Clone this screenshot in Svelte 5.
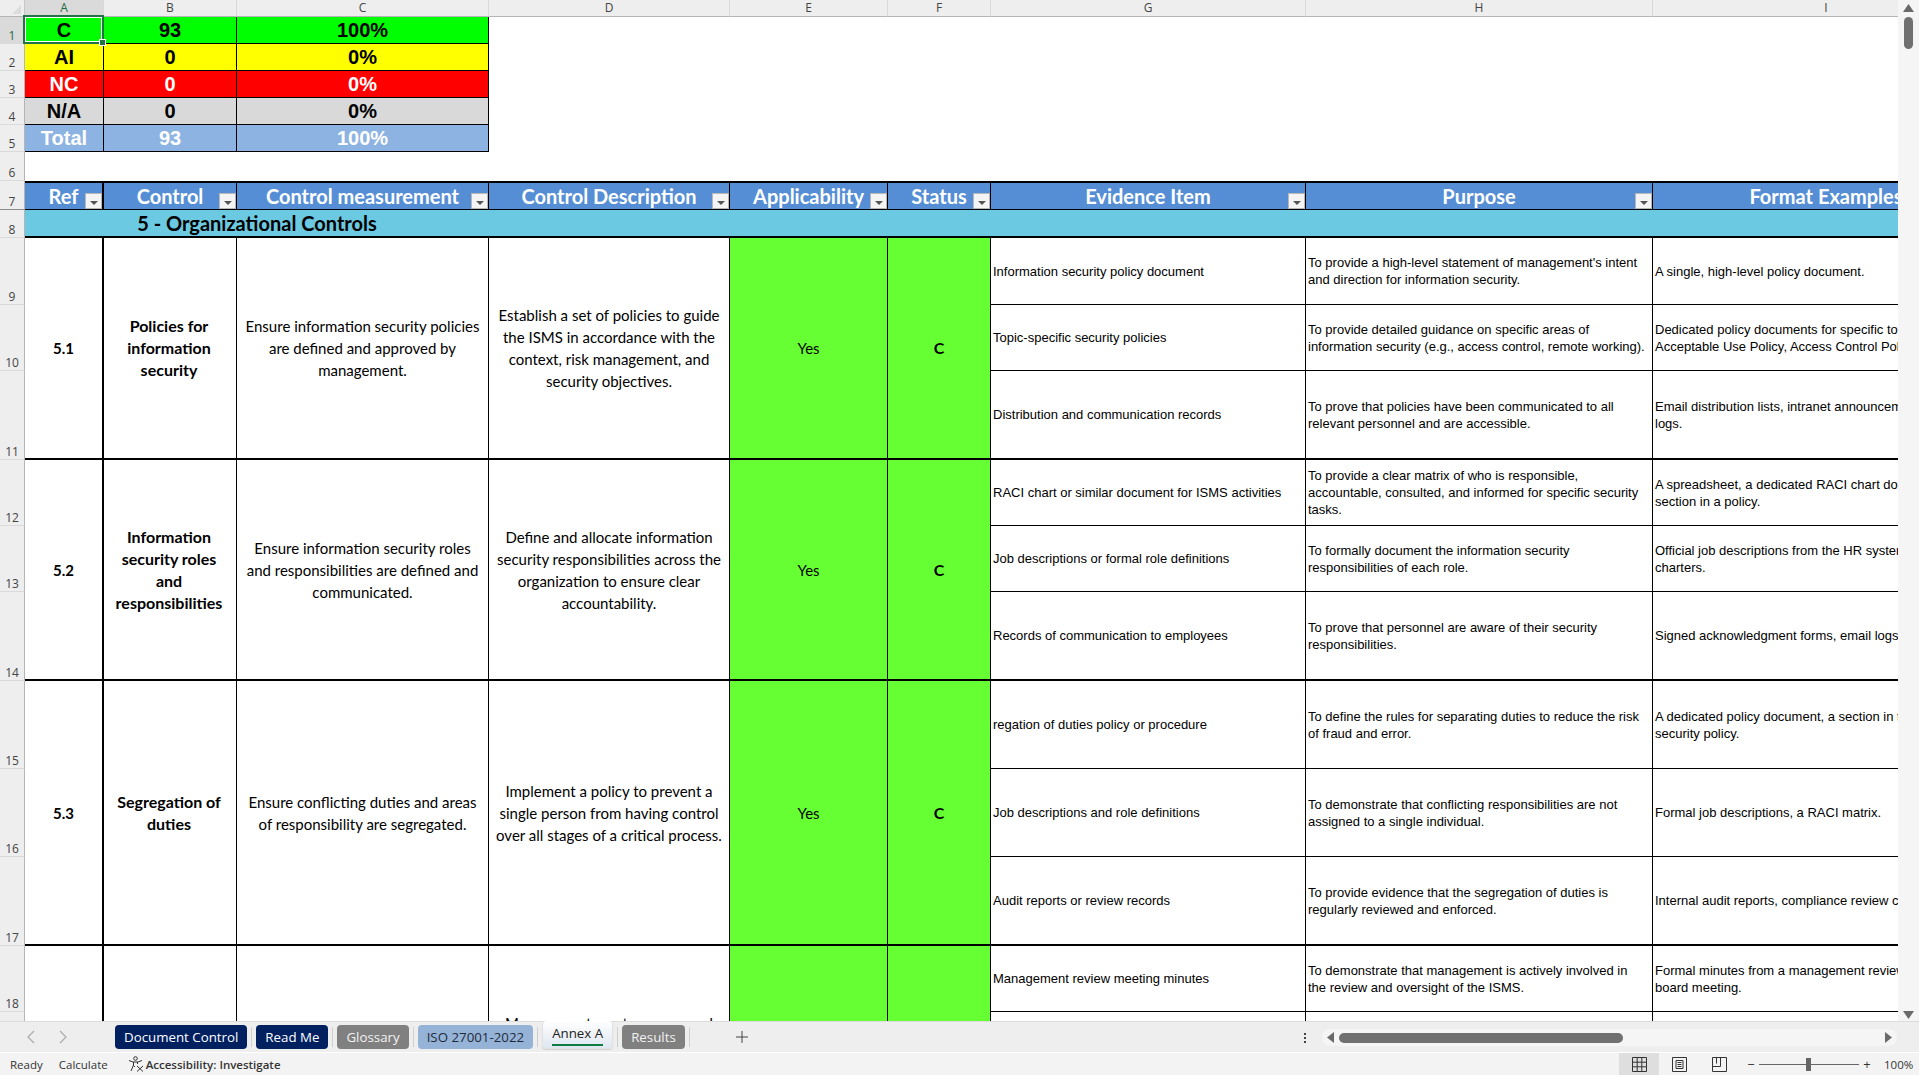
<script lang="ts">
  const cols = ['A', 'B', 'C', 'D', 'E', 'F', 'G', 'H', 'I'];

  const summary = [
    { key: 'C', n: '93', pct: '100%', cls: 'ok' },
    { key: 'AI', n: '0', pct: '0%', cls: 'improve' },
    { key: 'NC', n: '0', pct: '0%', cls: 'bad' },
    { key: 'N/A', n: '0', pct: '0%', cls: 'na' },
    { key: 'Total', n: '93', pct: '100%', cls: 'total' }
  ];

  const heads = [
    ['Ref', true], ['Control', true], ['Control measurement', true], ['Control Description', true],
    ['Applicability', true], ['Status', true], ['Evidence Item', true], ['Purpose', true], ['Format Examples', false]
  ];

  const groups = [
    {
      ref: '5.1',
      control: 'Policies for\ninformation\nsecurity',
      measure: 'Ensure information security policies\nare defined and approved by\nmanagement.',
      desc: 'Establish a set of policies to guide\nthe ISMS in accordance with the\ncontext, risk management, and\nsecurity objectives.',
      rows: [
        ['Information security policy document', "To provide a high-level statement of management's intent\nand direction for information security.", 'A single, high-level policy document.'],
        ['Topic-specific security policies', 'To provide detailed guidance on specific areas of\ninformation security (e.g., access control, remote working).', 'Dedicated policy documents for specific topics, e.g.,\nAcceptable Use Policy, Access Control Policy.'],
        ['Distribution and communication records', 'To prove that policies have been communicated to all\nrelevant personnel and are accessible.', 'Email distribution lists, intranet announcements, training\nlogs.']
      ]
    },
    {
      ref: '5.2',
      control: 'Information\nsecurity roles\nand\nresponsibilities',
      measure: 'Ensure information security roles\nand responsibilities are defined and\ncommunicated.',
      desc: 'Define and allocate information\nsecurity responsibilities across the\norganization to ensure clear\naccountability.',
      rows: [
        ['RACI chart or similar document for ISMS activities', 'To provide a clear matrix of who is responsible,\naccountable, consulted, and informed for specific security\ntasks.', 'A spreadsheet, a dedicated RACI chart document, or a\nsection in a policy.'],
        ['Job descriptions or formal role definitions', 'To formally document the information security\nresponsibilities of each role.', 'Official job descriptions from the HR system, team\ncharters.'],
        ['Records of communication to employees', 'To prove that personnel are aware of their security\nresponsibilities.', 'Signed acknowledgment forms, email logs, and records.']
      ]
    },
    {
      ref: '5.3',
      control: 'Segregation of\nduties',
      measure: 'Ensure conflicting duties and areas\nof responsibility are segregated.',
      desc: 'Implement a policy to prevent a\nsingle person from having control\nover all stages of a critical process.',
      rows: [
        ['regation of duties policy or procedure', 'To define the rules for separating duties to reduce the risk\nof fraud and error.', 'A dedicated policy document, a section in the overall\nsecurity policy.'],
        ['Job descriptions and role definitions', 'To demonstrate that conflicting responsibilities are not\nassigned to a single individual.', 'Formal job descriptions, a RACI matrix.'],
        ['Audit reports or review records', 'To provide evidence that the segregation of duties is\nregularly reviewed and enforced.', 'Internal audit reports, compliance review checklists.']
      ]
    },
    {
      ref: '5.4',
      control: 'Management\nresponsibilities',
      measure: 'Ensure management supports and\nenforces information security.',
      desc: 'Management must approve and\nsupport the ISMS, and ensure all\npersonnel apply security in line\nwith policy.',
      rows: [
        ['Management review meeting minutes', 'To demonstrate that management is actively involved in\nthe review and oversight of the ISMS.', 'Formal minutes from a management review meeting, a\nboard meeting.'],
        ['Budget approvals for security activities', 'To show that resources are provided for the ISMS.', 'Approved budget documents.'],
        ['Signed policy statements', 'To show commitment from top management.', 'Signed policy documents.']
      ]
    }
  ];

  const tabs = [
    { name: 'Document Control', cls: 'navy' },
    { name: 'Read Me', cls: 'navy' },
    { name: 'Glossary', cls: 'grey' },
    { name: 'ISO 27001-2022', cls: 'blue' },
    { name: 'Annex A', cls: 'active' },
    { name: 'Results', cls: 'grey' }
  ];
</script>

<div class="app">
  <div class="main">
    <div class="viewport">
      <div class="grid">
        <div class="corner"><span class="tri"></span></div>
        {#each cols as c, i}
          <div class="colhead" class:on={i === 0}>{c}</div>
        {/each}

        {#each summary as s, i}
          <div class="rowhead" class:on={i === 0}>{i + 1}</div>
          <div class="sum {s.cls}">
            {s.key}
            {#if i === 0}
              <div class="sel"><span class="handle"></span></div>
            {/if}
          </div>
          <div class="sum {s.cls}">{s.n}</div>
          <div class="sum {s.cls}">{s.pct}</div>
          <div class="blank wide6"></div>
        {/each}

        <div class="rowhead">6</div>
        <div class="blank wide9"></div>

        <div class="rowhead frozen">7</div>
        {#each heads as h, i}
          <div class="head" class:thick={i === 0}>
            <span>{h[0]}</span>
            {#if h[1]}
              <span class="filter"><i></i></span>
            {/if}
          </div>
        {/each}

        <div class="rowhead">8</div>
        <div class="section wide3">5 - Organizational Controls</div>
        <div class="section wide6"></div>

        {#each groups as g, gi}
          {#each g.rows as r, i}
            <div class="rowhead">{9 + gi * 3 + i}</div>
            {#if i === 0}
              <div class="c ref span3">{g.ref}</div>
              <div class="c name span3">{g.control}</div>
              <div class="c body span3">{g.measure}</div>
              <div class="c body span3">{g.desc}</div>
              <div class="c body span3 pass">Yes</div>
              <div class="c result span3 pass">C</div>
            {/if}
            {#each r as t}
              <div class="c ev" class:last={i === 2}>{t}</div>
            {/each}
          {/each}
        {/each}
      </div>
    </div>

    <div class="vscroll">
      <svg class="varrow" width="11" height="8" viewBox="0 0 11 8"><path d="M5.5 0 11 8H0z" /></svg>
      <div class="vthumb"></div>
      <svg class="varrow down" width="11" height="8" viewBox="0 0 11 8"><path d="M0 0h11L5.5 8z" /></svg>
    </div>
  </div>

  <div class="tabbar">
    <div class="nav">
      <svg width="10" height="14" viewBox="0 0 10 14"><path d="M8 1 2 7l6 6" /></svg>
      <svg width="10" height="14" viewBox="0 0 10 14"><path d="m2 1 6 6-6 6" /></svg>
    </div>
    <div class="tabs">
      {#each tabs as t}
        <div class="tab {t.cls}"><span>{t.name}</span></div>
        <span class="sep"></span>
      {/each}
    </div>
    <svg class="plus" width="12" height="12" viewBox="0 0 12 12"><path d="M6 0v12M0 6h12" /></svg>
    <div class="dots"><i></i><i></i><i></i></div>
    <div class="hscroll">
      <svg width="7" height="11" viewBox="0 0 7 11"><path d="M7 0v11L0 5.5z" /></svg>
      <div class="hthumb"></div>
      <svg class="hright" width="7" height="11" viewBox="0 0 7 11"><path d="M0 0v11l7-5.5z" /></svg>
    </div>
  </div>

  <div class="statusbar">
    <span class="st ready">Ready</span>
    <span class="st calc">Calculate</span>
    <svg class="a11y" width="17" height="16" viewBox="0 0 17 16">
      <circle cx="7.5" cy="2.5" r="1.8" />
      <path d="M1 4.5 5 6h5l4-1.500M5.500 6v3L3 15M9.500 6v2M5.500 9.500 7 11" />
      <path d="m9 10 6 5.500M15 10l-6 5.500" />
    </svg>
    <span class="st acc">Accessibility: Investigate</span>

    <div class="views">
      <div class="view current">
        <svg width="15" height="15" viewBox="0 0 15 15"><path d="M.5.5h14v14H.5zM5.200.5v14M9.800.5v14M.5 5.200h14M.5 9.800h14" /></svg>
      </div>
      <div class="view">
        <svg width="15" height="15" viewBox="0 0 15 15"><path d="M.5.5h14v14H.5zM4 3.500h7v8H4zM5.500 5.500h4M5.500 7.500h4M5.500 9.500h4" /></svg>
      </div>
      <div class="view">
        <svg width="15" height="15" viewBox="0 0 15 15"><path d="M.5.5h14v14H.5zM.5 9.500h8V.5M4.500.5v6" /></svg>
      </div>
    </div>
    <div class="zoom">
      <span class="zm">−</span>
      <div class="slider"><i></i></div>
      <span class="zm">+</span>
      <span class="pct">100%</span>
    </div>
  </div>
</div>

<style>
  :global(body) { margin:0; background:#fff; }
  .app       { width:1919px; height:1075px; display:flex; flex-direction:column; overflow:hidden; font-family:"Open Sans",sans-serif; color:#000; }
  .main      { display:flex; height:1021px; flex:none; }
  .viewport  { width:1898px; overflow:hidden; flex:none; }

  .grid {
    display:grid;
    width:2000px;
    grid-template-columns:25px 79px 133px 252px 241px 158px 103px 315px 347px 347px;
    grid-template-rows:17px 27px 27px 27px 27px 27px 29px 29px 28px 67px 66px 89px 66px 66px 89px 88px 88px 89px 66px 66px 89px;
  }

  .corner    { background:#eee; border-right:1px solid #c6c6c6; border-bottom:1px solid #b5b5b5; position:relative; box-sizing:border-box; }
  .tri       { position:absolute; right:3px; bottom:2px; border-style:solid; border-width:0 0 9px 9px; border-color:transparent transparent #dcdcdc transparent; }
  .colhead   { background:#eee; color:#444; border-right:1px solid #d8d8d8; border-bottom:1px solid #b5b5b5; box-sizing:border-box; font-size:12px; line-height:16px; text-align:center; }
  .colhead.on { background:#dadada; color:#1d6b41; }
  .rowhead   { background:#eee; color:#444; border-right:1px solid #b5b5b5; border-bottom:1px solid #dadada; box-sizing:border-box; font-size:12px; line-height:15px; display:flex; align-items:flex-end; justify-content:center; }
  .rowhead.on { background:#dadada; color:#1d6b41; }
  .rowhead.frozen { border-bottom-color:#8c8c8c; }

  .blank     { background:#fff; }
  .wide3     { grid-column:span 3; }
  .wide6     { grid-column:span 6; }
  .wide9     { grid-column:span 9; }

  .sum       { display:flex; align-items:center; justify-content:center; box-sizing:border-box; position:relative; border-right:1px solid #000; border-bottom:1px solid #000; font:bold 20px "Liberation Sans",sans-serif; }
  .ok        { background:#00ff00; }
  .improve   { background:#ffff00; }
  .bad       { background:#ff0000; color:#fff; }
  .na        { background:#d9d9d9; }
  .total     { background:#8db3e2; color:#fff; }
  .sel       { position:absolute; top:-2px; left:-2px; right:-1px; bottom:-1px; border:2px solid #217346; box-shadow:inset 0 0 0 1px #fff; z-index:2; }
  .handle    { position:absolute; right:-4px; bottom:-4px; width:5px; height:5px; background:#217346; border:1px solid #fff; }

  .head      { background:#558ed5; color:#fff; font:bold 20px Lato,sans-serif; display:flex; align-items:center; justify-content:center; box-sizing:border-box; position:relative; border-top:2px solid #000; border-right:1px solid #000; border-bottom:1px solid #000; }
  .head.thick { border-right-width:2px; }
  .filter    { position:absolute; right:0; bottom:0; width:17px; height:16px; box-sizing:border-box; background:#f4f4f4; border:1px solid #b8b8b8; display:flex; align-items:center; justify-content:center; }
  .filter i  { margin-top:3px; border-style:solid; border-width:4px 4px 0 4px; border-color:#555 transparent transparent transparent; }

  .section   { background:#6bcae2; font:bold 20px Lato,sans-serif; display:flex; align-items:center; justify-content:center; box-sizing:border-box; border-bottom:2px solid #000; }

  .c         { background:#fff; box-sizing:border-box; border-right:1px solid #000; border-bottom:1px solid #000; display:flex; align-items:center; white-space:pre-line; }
  .span3     { grid-row:span 3; border-bottom-width:2px; justify-content:center; text-align:center; font:15px/22px Lato,sans-serif; }
  .ref       { font-weight:bold; border-right-width:2px; }
  .name      { font-weight:bold; font-size:16px; padding-right:2px; }
  .pass      { background:#66ff33; }
  .result    { font-weight:bold; font-size:16px; }
  .ev        { font:13px/17px "Liberation Sans",sans-serif; padding-left:2px; }
  .ev.last   { border-bottom-width:2px; }

  .vscroll   { flex:1; background:#f5f5f5; position:relative; display:flex; flex-direction:column; align-items:center; padding-top:4px; }
  .varrow    { fill:#6a6a6a; flex:none; }
  .varrow.down { position:absolute; bottom:2px; }
  .vthumb    { width:9px; height:32px; margin-top:5px; background:#707070; border-radius:5px; }

  .tabbar    { height:32px; flex:none; background:#eee; display:flex; align-items:center; box-sizing:border-box; border-top:1px solid #dcdcdc; border-bottom:1px solid #fff; position:relative; }
  .nav       { width:115px; flex:none; display:flex; gap:22px; padding-left:26px; box-sizing:border-box; }
  .nav svg   { fill:none; stroke:#ababab; stroke-width:1.2; }
  .tabs      { display:flex; align-items:center; height:100%; }
  .tab       { height:24px; box-sizing:border-box; border-radius:4px; display:flex; align-items:center; justify-content:center; font-size:13.3px; padding:0 9px; color:#fff; flex:none; }
  .navy      { background:#002060; }
  .grey      { background:#808080; color:#f2f2f2; }
  .blue      { background:#95b3d7; color:#1f2a3a; }
  .active    { height:28px; margin-top:-4px; padding-top:1px; background:linear-gradient(#fff,#dfe7f1); border:1px solid #e2e2e2; border-top:none; box-shadow:0 1px 1px rgba(0,0,0,.12); color:#222; font-weight:500; align-items:flex-start; }
  .active span { border-bottom:2px solid #107c41; line-height:22px; }
  .sep       { width:1px; height:20px; background:#cfcfcf; margin:0 4px; flex:none; }
  .plus      { stroke:#444; stroke-width:1; margin-left:42px; flex:none; }
  .dots      { position:absolute; left:1304px; top:11px; display:flex; flex-direction:column; gap:2px; }
  .dots i    { width:2px; height:2px; background:#444; }
  .hscroll   { position:absolute; left:1322px; top:7px; width:575px; height:17px; border-radius:8px; background:#f5f5f5; display:flex; align-items:center; padding-left:5px; box-sizing:border-box; fill:#6a6a6a; }
  .hthumb    { width:284px; height:10px; margin-left:5px; border-radius:5px; background:#707070; }
  .hright    { margin-left:auto; margin-right:5px; }

  .statusbar { flex:1; background:#f3f3f3; display:flex; align-items:center; position:relative; font-size:11.5px; color:#333; }
  .st        { flex:none; }
  .ready     { margin-left:10px; }
  .calc      { margin-left:16px; }
  .a11y      { margin-left:20px; fill:none; stroke:#333; stroke-width:1; flex:none; }
  .acc       { margin-left:1px; font-weight:600; }
  .views     { position:absolute; left:1619px; top:0; bottom:0; display:flex; }
  .view      { width:40px; display:flex; align-items:center; justify-content:center; }
  .view.current { background:#dedede; }
  .view svg  { fill:none; stroke:#333; stroke-width:1; }
  .zoom      { position:absolute; left:1745px; top:0; bottom:0; display:flex; align-items:center; font-size:13px; }
  .zm        { width:12px; text-align:center; }
  .slider    { width:100px; height:1px; background:#666; margin:0 2px; position:relative; }
  .slider i  { position:absolute; left:47px; top:-6px; width:5px; height:13px; background:#666; }
  .pct       { margin-left:11px; font-size:11.5px; }
</style>
